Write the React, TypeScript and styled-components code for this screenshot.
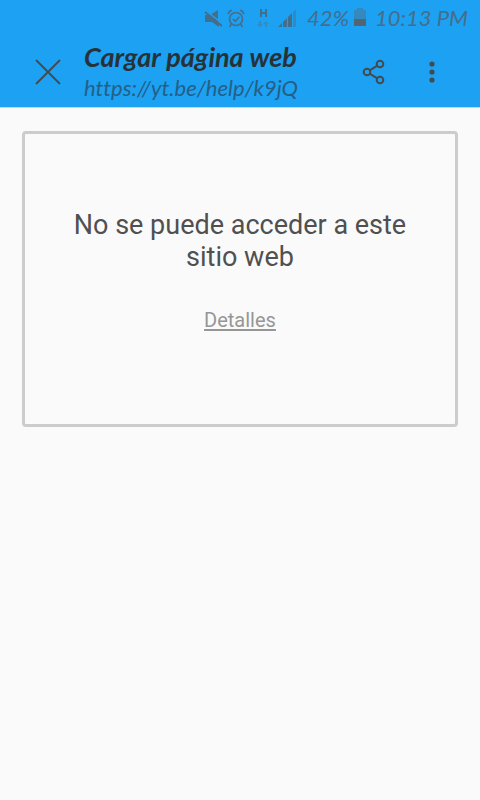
import React from "react";
import styled, { createGlobalStyle } from "styled-components";

const GlobalStyle = createGlobalStyle`
  * { box-sizing: border-box; }
  body { margin: 0; background: #fafafa; font-family: Roboto, sans-serif; }
`;

const Header = styled.header`
  background: #1da1f2;
  border-bottom: 1px solid #b9d9ee;
`;

const StatusBar = styled.div`
  display: flex;
  align-items: center;
  justify-content: flex-end;
  height: 36px;
  padding-right: 12px;
  color: #456e8b;
  font: italic 22px/36px Lato, sans-serif;
  white-space: nowrap;
  svg { display: block; flex: none; }
`;

const StatusIcons = styled.div`
  display: flex;
  align-items: center;
  gap: 8px;
  margin-right: 10px;
`;

const IconPair = styled.div`
  display: flex;
  align-items: center;
  gap: 4px;
  margin-right: 3px;
`;

const Percent = styled.span`
  margin-right: 5px;
`;

const Clock = styled.time`
  margin-left: 9px;
`;

const Toolbar = styled.div`
  display: flex;
  align-items: center;
  height: 71px;
  padding: 0 24px;
`;

const IconButton = styled.button`
  display: grid;
  place-items: center;
  flex: none;
  width: 48px;
  height: 48px;
  padding: 0;
  border: 0;
  background: none;
  color: #454a4e;
  cursor: pointer;
`;

const PageInfo = styled.div`
  flex: 1;
  min-width: 0;
  padding-left: 12px;
  font-family: Lato, sans-serif;
  font-style: italic;
  font-variant-ligatures: none;
  white-space: nowrap;
`;

const Title = styled.h1`
  margin: 0;
  color: #263238;
  font-size: 27px;
  font-weight: 700;
  line-height: 32px;
`;

const Address = styled.div`
  color: #245f87;
  font-size: 22px;
  line-height: 30px;
`;

const Actions = styled.div`
  display: flex;
  gap: 10px;
`;

const ErrorPanel = styled.main`
  display: flex;
  flex-direction: column;
  align-items: center;
  margin: 23px 22px;
  padding: 75px 40px 89px;
  border: 3px solid #cccccc;
  border-radius: 4px;
  text-align: center;
`;

const Message = styled.h2`
  margin: 0 0 32px;
  color: #505050;
  font-size: 27px;
  font-weight: 400;
  line-height: 32px;
`;

const DetailsLink = styled.a`
  color: #969696;
  font-size: 20px;
  line-height: 30px;
  text-decoration: underline;
  text-underline-offset: 2px;
`;

const MutedIcon = () => (
  <svg width="19" height="20" viewBox="0 0 19 20" fill="currentColor" aria-hidden="true">
    <path d="M14 2v12L6 7zM1 7h5l9 8v4l-7-5H1z" />
    <path d="M2 3l17 13" stroke="#1da1f2" strokeWidth="1.5" />
    <path d="M1 4l17 14" stroke="currentColor" strokeWidth="2" />
  </svg>
);

const AlarmIcon = () => (
  <svg width="18" height="20" viewBox="0 0 18 20" fill="none" stroke="currentColor" strokeWidth="1.6" aria-hidden="true">
    <circle cx="9" cy="11" r="6.5" />
    <path d="M1.2 6.2C1.5 4 3 2.6 5 2.3M13 2.3c2 .3 3.5 1.7 3.8 3.9M4.4 16L2.5 19M13.6 16l1.9 3M5.8 11l2.5 2.3 4-4.6" />
  </svg>
);

const NetworkIcon = () => (
  <svg width="14" height="20" viewBox="0 0 14 20" fill="none" aria-hidden="true">
    <path d="M5 1v8M10 1v8M5 5h5" stroke="currentColor" strokeWidth="2" />
    <path d="M3 13h2v3h2l-3 3-3-3h2zM9 19h2v-3h2l-3-3-3 3h2z" fill="#358abe" />
  </svg>
);

const SignalIcon = () => (
  <svg width="19" height="20" viewBox="0 0 19 20" fill="currentColor" aria-hidden="true">
    <path d="M0 19l4-4v4zM5 14l4-4v9H5zM10 9l4-4v14h-4z" />
    <path d="M15 4l3-3v18h-3z" fill="#3489be" />
  </svg>
);

const BatteryIcon = () => (
  <svg width="12" height="20" viewBox="0 0 12 20" aria-hidden="true">
    <path d="M0 2h3V0h6v2h3v9H0z" fill="#3489be" />
    <path d="M0 11h12v7H0z" fill="#526572" />
  </svg>
);

const CloseIcon = () => (
  <svg width="26" height="26" viewBox="0 0 26 26" fill="none" stroke="currentColor" strokeWidth="1.8" aria-hidden="true">
    <path d="M1 1l24 24M25 1L1 25" />
  </svg>
);

const ShareIcon = () => (
  <svg width="24" height="26" viewBox="0 0 24 26" fill="none" stroke="currentColor" strokeWidth="2" aria-hidden="true">
    <circle cx="5" cy="13" r="3.3" />
    <circle cx="18" cy="5" r="3.3" />
    <circle cx="18" cy="21" r="3.3" />
    <path d="M8 11.2l7-4.3M8 14.8l7 4.3" />
  </svg>
);

const MoreIcon = () => (
  <svg width="6" height="24" viewBox="0 0 6 24" fill="currentColor" aria-hidden="true">
    <circle cx="3" cy="4" r="2.6" />
    <circle cx="3" cy="12" r="2.6" />
    <circle cx="3" cy="20" r="2.6" />
  </svg>
);

export default function App() {
  return (
    <>
      <GlobalStyle />
      <Header>
        <StatusBar>
          <StatusIcons>
            <IconPair>
              <MutedIcon />
              <AlarmIcon />
            </IconPair>
            <NetworkIcon />
            <SignalIcon />
          </StatusIcons>
          <Percent>42%</Percent>
          <BatteryIcon />
          <Clock>10:13 PM</Clock>
        </StatusBar>
        <Toolbar>
          <IconButton type="button" aria-label="Cerrar"><CloseIcon /></IconButton>
          <PageInfo>
            <Title>Cargar página web</Title>
            <Address>https://yt.be/help/k9jQ</Address>
          </PageInfo>
          <Actions>
            <IconButton type="button" aria-label="Compartir"><ShareIcon /></IconButton>
            <IconButton type="button" aria-label="Más opciones"><MoreIcon /></IconButton>
          </Actions>
        </Toolbar>
      </Header>
      <ErrorPanel>
        <Message>No se puede acceder a este sitio web</Message>
        <DetailsLink href="#detalles">Detalles</DetailsLink>
      </ErrorPanel>
    </>
  );
}
